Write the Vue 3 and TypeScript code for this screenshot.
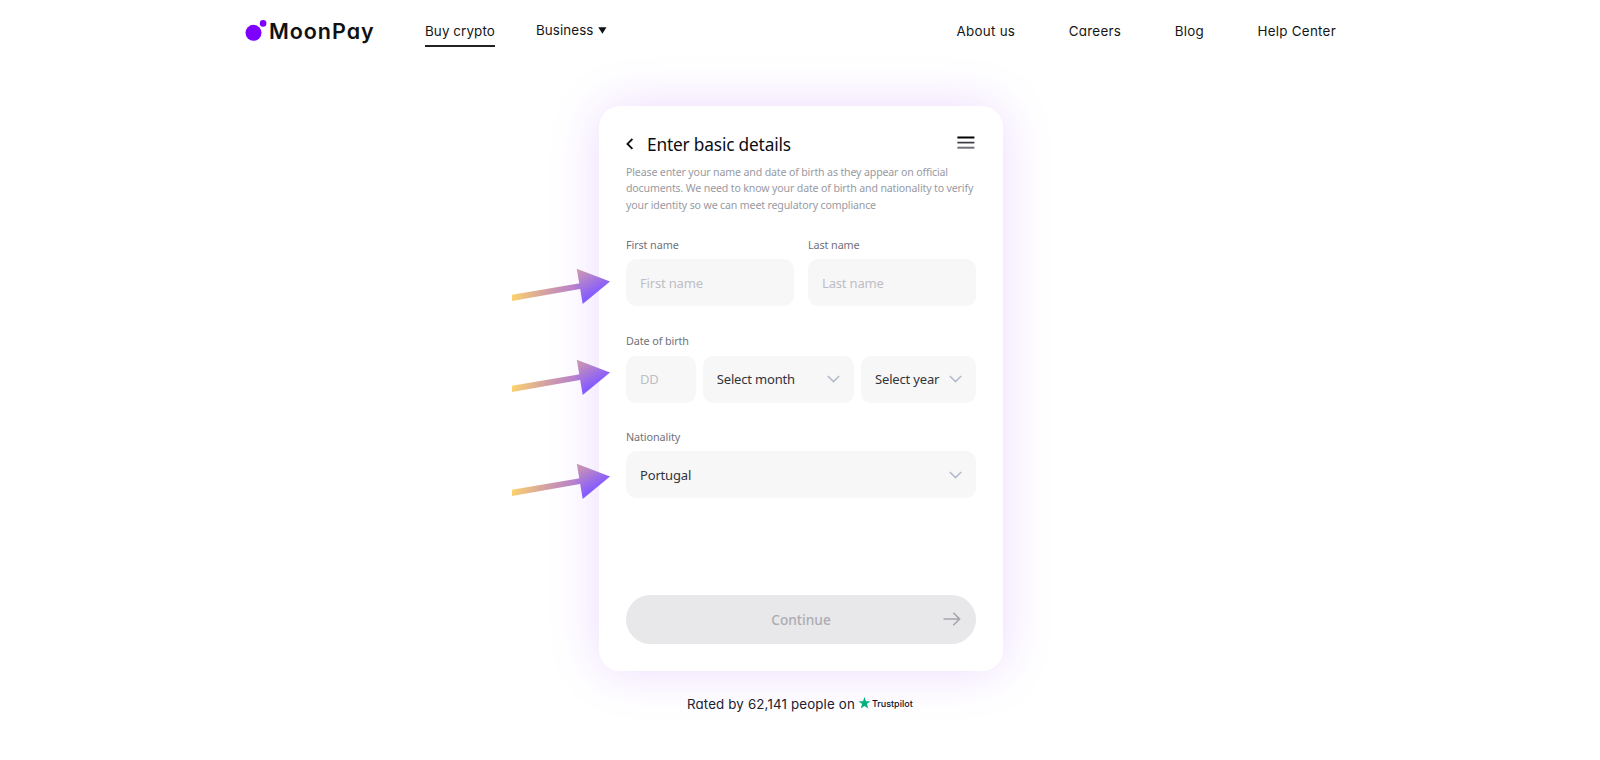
<template>
  <div class="page">
    <header class="header">
      <a class="logo">
        <svg class="logo-mark" width="22" height="24" viewBox="0 0 22 24">
          <circle cx="8.5" cy="14.8" r="8" fill="#7d00ff" />
          <circle cx="18.1" cy="5.4" r="3.3" fill="#7d00ff" />
        </svg>
        <span class="logo-text">MoonPay</span>
      </a>
      <nav class="nav-left">
        <a class="nav-link active">Buy crypto</a>
        <a class="nav-link business">
          <span>Business</span>
          <svg width="9" height="7" viewBox="0 0 9 7"><path d="M.3.3h8.2L4.4 6.8z" fill="#111" /></svg>
        </a>
      </nav>
      <nav class="nav-right">
        <a v-for="link in links" :key="link" class="nav-link">{{ link }}</a>
      </nav>
    </header>

    <main class="card">
      <div class="card-head">
        <svg class="back" width="8" height="12" viewBox="0 0 8 12">
          <path d="M6.4 1 1.5 5.9l4.9 4.9" fill="none" stroke="#111" stroke-width="1.9" />
        </svg>
        <h1 class="title">Enter basic details</h1>
        <svg class="menu" width="18" height="13" viewBox="0 0 18 13">
          <path d="M.4 1.5h17" stroke="#000" stroke-width="2" />
          <path d="M.4 6.6h17" stroke="#3b3b45" stroke-width="1.7" />
          <path d="M.4 11.7h17" stroke="#70707a" stroke-width="2" />
        </svg>
      </div>
      <p class="desc">
        Please enter your name and date of birth as they appear on official<br />
        documents. We need to know your date of birth and nationality to verify<br />
        your identity so we can meet regulatory compliance
      </p>

      <div class="names">
        <label class="field">
          <span class="label">First name</span>
          <input v-model="firstName" class="control" placeholder="First name" />
        </label>
        <label class="field">
          <span class="label">Last name</span>
          <input v-model="lastName" class="control" placeholder="Last name" />
        </label>
      </div>

      <div class="field birth">
        <span class="label">Date of birth</span>
        <div class="dates">
          <input v-model="day" class="control" placeholder="DD" />
          <button v-for="item in dateSelects" :key="item" class="control select">
            <span>{{ item }}</span>
            <svg class="chevron" width="13" height="8" viewBox="0 0 13 8"><path d="m.8 1 5.7 5.6L12.2 1" /></svg>
          </button>
        </div>
      </div>

      <div class="field nationality">
        <span class="label">Nationality</span>
        <button class="control select">
          <span>{{ nationality }}</span>
          <svg class="chevron" width="13" height="8" viewBox="0 0 13 8"><path d="m.8 1 5.7 5.6L12.2 1" /></svg>
        </button>
      </div>

      <button class="continue" disabled>
        <span class="continue-text">Continue</span>
        <svg class="continue-arrow" width="18" height="14" viewBox="0 0 18 14">
          <path d="M.5 7h16M10.3.8 16.6 7l-6.3 6.2" fill="none" stroke="#a5a5ad" stroke-width="1.6" />
        </svg>
      </button>

      <svg
        v-for="(top, i) in pointers"
        :key="top"
        class="pointer"
        :style="{ top: top + 'px' }"
        width="98"
        height="36"
        viewBox="0 0 98 36"
      >
        <defs>
          <linearGradient :id="'pointer' + i" gradientUnits="userSpaceOnUse" x1="2" y1="19" x2="82" y2="31">
            <stop offset="0" stop-color="#fbd06e" />
            <stop offset="0.5" stop-color="#c995af" />
            <stop offset="0.72" stop-color="#b982cb" />
            <stop offset="1" stop-color="#865cff" />
          </linearGradient>
          <linearGradient :id="'tip' + i" gradientUnits="userSpaceOnUse" x1="65" y1="2" x2="80" y2="27">
            <stop offset="0" stop-color="#d09aac" />
            <stop offset="1" stop-color="#865cff" />
          </linearGradient>
        </defs>
        <path d="M0 26.8 68 15.2v5.7L0 33z" :fill="`url(#pointer${i})`" />
        <path d="M64.8.8 98 13.4 70.7 36z" :fill="`url(#tip${i})`" />
      </svg>
    </main>

    <footer class="rating">
      <span class="rating-text">Rated by 62,141 people on</span>
      <svg class="star" width="13" height="12" viewBox="0 0 12 12">
        <path d="M6 0l1.5 4.3H12L8.4 7l1.4 4.6L6 8.9l-3.8 2.7L3.6 7 0 4.3h4.5z" fill="#00b67a" />
      </svg>
      <span class="trustpilot">Trustpilot</span>
    </footer>
  </div>
</template>

<script setup lang="ts">
import { ref } from 'vue'

const links: string[] = ['About us', 'Careers', 'Blog', 'Help Center']
const dateSelects: string[] = ['Select month', 'Select year']
const pointers: number[] = [162, 253, 357]

const firstName = ref('')
const lastName = ref('')
const day = ref('')
const nationality = ref('Portugal')
</script>

<style>
body {
  background: #fff;
}
</style>

<style scoped>
.page {
  height: 760px;
  overflow: hidden;
  background: #fff;
  font-family: 'Noto Sans', 'Open Sans', sans-serif;
}
.header {
  display: flex;
  box-sizing: border-box;
  height: 106px;
  padding: 18px 264px 0 245px;
  font-family: Inter, sans-serif;
  font-feature-settings: 'cv11';
}
.logo {
  display: flex;
  width: 180px;
}
.logo-text {
  margin-left: 2px;
  font-size: 21.5px;
  font-weight: 600;
  line-height: 27px;
  letter-spacing: 0.95px;
  color: #111;
}
.nav-left {
  display: flex;
  gap: 41px;
}
.nav-link {
  height: 27px;
  font-size: 13.4px;
  line-height: 27px;
  letter-spacing: 0.27px;
  color: #161616;
  white-space: nowrap;
}
.nav-left .nav-link {
  letter-spacing: 0.1px;
}
.active {
  border-bottom: 2px solid #222;
}
.nav-link.business {
  display: flex;
  align-items: center;
  gap: 4px;
  height: 25px;
}
.nav-right {
  display: flex;
  gap: 53.5px;
  margin-left: auto;
}
.card {
  position: relative;
  box-sizing: border-box;
  width: 404px;
  height: 565px;
  margin: 0 0 0 599px;
  padding: 27px 27px 0;
  border-radius: 21px;
  background: #fff;
  box-shadow: 0 0 52px rgba(125, 0, 255, 0.15);
}
.card-head {
  display: flex;
  height: 24px;
}
.back {
  margin-top: 5px;
}
.title {
  margin: 0 0 0 13px;
  font-size: 17.3px;
  font-weight: 400;
  line-height: 24px;
  letter-spacing: -0.18px;
  color: #0c0c14;
}
.menu {
  margin: 3px 1px 0 auto;
}
.desc {
  height: 50px;
  margin: 7px 0 0;
  font-size: 10.6px;
  line-height: 16.4px;
  letter-spacing: -0.15px;
  color: #999aa2;
  white-space: nowrap;
}
.names {
  display: flex;
  gap: 14px;
  margin-top: 24px;
}
.names .field {
  flex: 1;
}
.field {
  display: flex;
  flex-direction: column;
}
.label {
  height: 21px;
  font-size: 10.8px;
  line-height: 14px;
  letter-spacing: -0.1px;
  color: #71717b;
}
.control {
  box-sizing: border-box;
  width: 100%;
  height: 47px;
  padding: 1px 14px 0;
  border: 0;
  border-radius: 10px;
  background: #f7f7f7;
  font-family: inherit;
  font-size: 13px;
  letter-spacing: -0.17px;
  color: #33333b;
  outline: none;
}
.control::placeholder {
  color: #bdbec5;
  opacity: 1;
}
.select {
  display: flex;
  align-items: center;
  justify-content: space-between;
  padding-top: 0;
  white-space: nowrap;
}
.chevron path {
  fill: none;
  stroke: #b3bcc9;
  stroke-width: 1.6;
}
.birth {
  margin-top: 28px;
}
.birth .label {
  height: 22px;
}
.dates {
  display: grid;
  grid-template-columns: 69.5px 151px 115px;
  gap: 7.25px;
}
.dates .control {
  padding: 0 14px 1px;
}
.nationality {
  margin-top: 27px;
}
.nationality .label {
  height: 21.4px;
}
.continue {
  display: flex;
  align-items: center;
  width: 350px;
  height: 49px;
  margin-top: 96.6px;
  padding: 0 15px 0 33px;
  border: 0;
  border-radius: 25px;
  background: #e8e8ea;
  font-family: inherit;
  color: #acacb4;
}
.continue-text {
  flex: 1;
  font-size: 13.7px;
  font-weight: 500;
  text-align: center;
}
.pointer {
  position: absolute;
  left: -87px;
}
.rating {
  display: flex;
  align-items: flex-start;
  padding: 23px 0 0 687px;
  font-family: Inter, sans-serif;
  font-feature-settings: 'cv11';
  color: #22222c;
  white-space: nowrap;
}
.rating-text {
  font-size: 13.3px;
  line-height: 20px;
  letter-spacing: 0.16px;
}
.star {
  margin: 3px 1px 0 3px;
}
.trustpilot {
  font-size: 9px;
  font-weight: 500;
  line-height: 20px;
  color: #111124;
}
</style>
